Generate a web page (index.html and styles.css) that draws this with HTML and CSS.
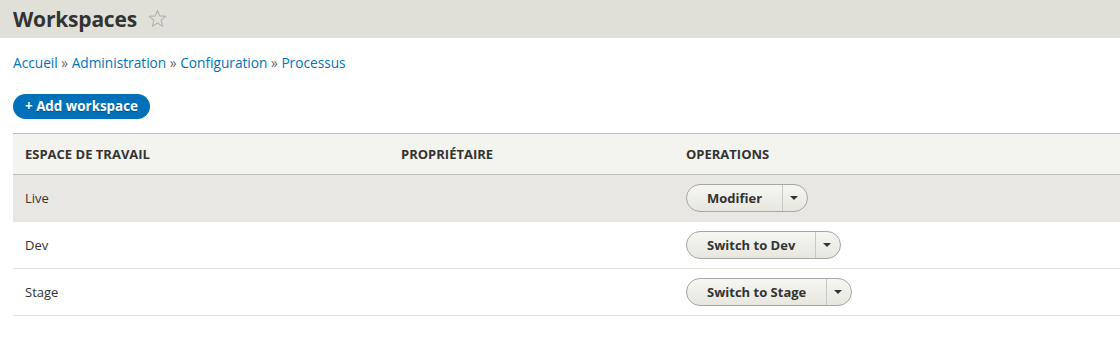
FILE: index.html
```html
<!DOCTYPE html>
<html lang="fr">
<head>
    <meta charset="UTF-8">
    <title>Workspaces</title>
    <link rel="stylesheet" href="styles.css">
</head>
<body>

<div class="page-header">
    <h1 class="page-title">Workspaces</h1>
    <svg class="shortcut-star" width="19" height="19" viewBox="0 0 20 20">
        <polygon points="10,1.5 12.4,7.3 18.7,7.8 13.9,11.9 15.4,18.1 10,14.8 4.6,18.1 6.1,11.9 1.3,7.8 7.6,7.3" fill="none" stroke="#b5b5b0" stroke-width="1.2" stroke-linejoin="round"/>
    </svg>
</div>

<div class="content">
    <nav class="breadcrumb">
        <a href="#">Accueil</a> » <a href="#">Administration</a> » <a href="#">Configuration</a> » <a href="#">Processus</a>
    </nav>

    <a class="button-action" href="#">+ Add workspace</a>

    <table class="workspaces">
        <thead>
            <tr>
                <th class="col-name">Espace de travail</th>
                <th class="col-owner">Propriétaire</th>
                <th>Operations</th>
            </tr>
        </thead>
        <tbody>
            <tr class="active">
                <td>Live</td>
                <td></td>
                <td>
                    <div class="dropbutton">
                        <a href="#" class="dropbutton-main">Modifier</a>
                        <span class="dropbutton-toggle"><span class="arrow"></span></span>
                    </div>
                </td>
            </tr>
            <tr>
                <td>Dev</td>
                <td></td>
                <td>
                    <div class="dropbutton">
                        <a href="#" class="dropbutton-main">Switch to Dev</a>
                        <span class="dropbutton-toggle"><span class="arrow"></span></span>
                    </div>
                </td>
            </tr>
            <tr>
                <td>Stage</td>
                <td></td>
                <td>
                    <div class="dropbutton">
                        <a href="#" class="dropbutton-main">Switch to Stage</a>
                        <span class="dropbutton-toggle"><span class="arrow"></span></span>
                    </div>
                </td>
            </tr>
        </tbody>
    </table>
</div>

</body>
</html>
```

FILE: styles.css
```css
body {
    font-family: 'Open Sans', 'DejaVu Sans', sans-serif;
    font-size: 13px;
    color: #333;
    background: #fff;
    margin: 0;
}
.page-header {
    display: flex;
    align-items: center;
    gap: 11px;
    height: 38px;
    padding: 0 13px;
    background-color: #e0e0d8;
}
.page-title {
    margin: 0;
    font-size: 21px;
    font-weight: bold;
    color: #333;
    letter-spacing: -0.2px;
}
.shortcut-star {
    margin-top: -1px;
}
.content {
    padding: 0 0 0 13px;
}
.breadcrumb {
    margin-top: 16px;
    line-height: 18px;
    font-size: 13.7px;
    color: #666;
}
.breadcrumb a {
    color: #0074bd;
    text-decoration: none;
}
.button-action {
    display: inline-block;
    margin-top: 22px;
    padding: 0 12px;
    height: 25px;
    line-height: 25px;
    border-radius: 13px;
    background-color: #0071b8;
    color: #fff;
    font-size: 13.4px;
    font-weight: bold;
    text-decoration: none;
    text-shadow: 0 1px 0 rgba(0, 0, 0, 0.3);
}
table.workspaces {
    width: 100%;
    border-collapse: collapse;
    margin-top: 14px;
}
table.workspaces th {
    height: 40px;
    padding: 0 12px;
    text-align: left;
    text-transform: uppercase;
    font-size: 13px;
    font-weight: bold;
    color: #333;
    background-color: #f3f3ef;
    border-top: 1px solid #bfbfba;
    border-bottom: 1px solid #bfbfba;
}
table.workspaces th.col-name {
    width: 352px;
}
table.workspaces th.col-owner {
    width: 261px;
}
table.workspaces td {
    height: 46px;
    padding: 0 12px;
    border-bottom: 1px solid #e6e4df;
}
table.workspaces tr.active td {
    background-color: #e8e7e3;
}
.dropbutton {
    display: inline-flex;
    height: 26px;
    border: 1px solid #a6a6a6;
    border-radius: 14px;
    background: linear-gradient(#f6f6f3, #e7e7df);
}
.dropbutton-main {
    padding: 0 20px;
    line-height: 26px;
    font-weight: bold;
    color: #333;
    text-decoration: none;
}
.dropbutton-toggle {
    display: flex;
    align-items: center;
    justify-content: center;
    width: 24px;
    border-left: 1px solid #c8c8c3;
}
.arrow {
    width: 0;
    height: 0;
    margin-right: 2px;
    border-left: 4px solid transparent;
    border-right: 4px solid transparent;
    border-top: 4px solid #333;
}
```
